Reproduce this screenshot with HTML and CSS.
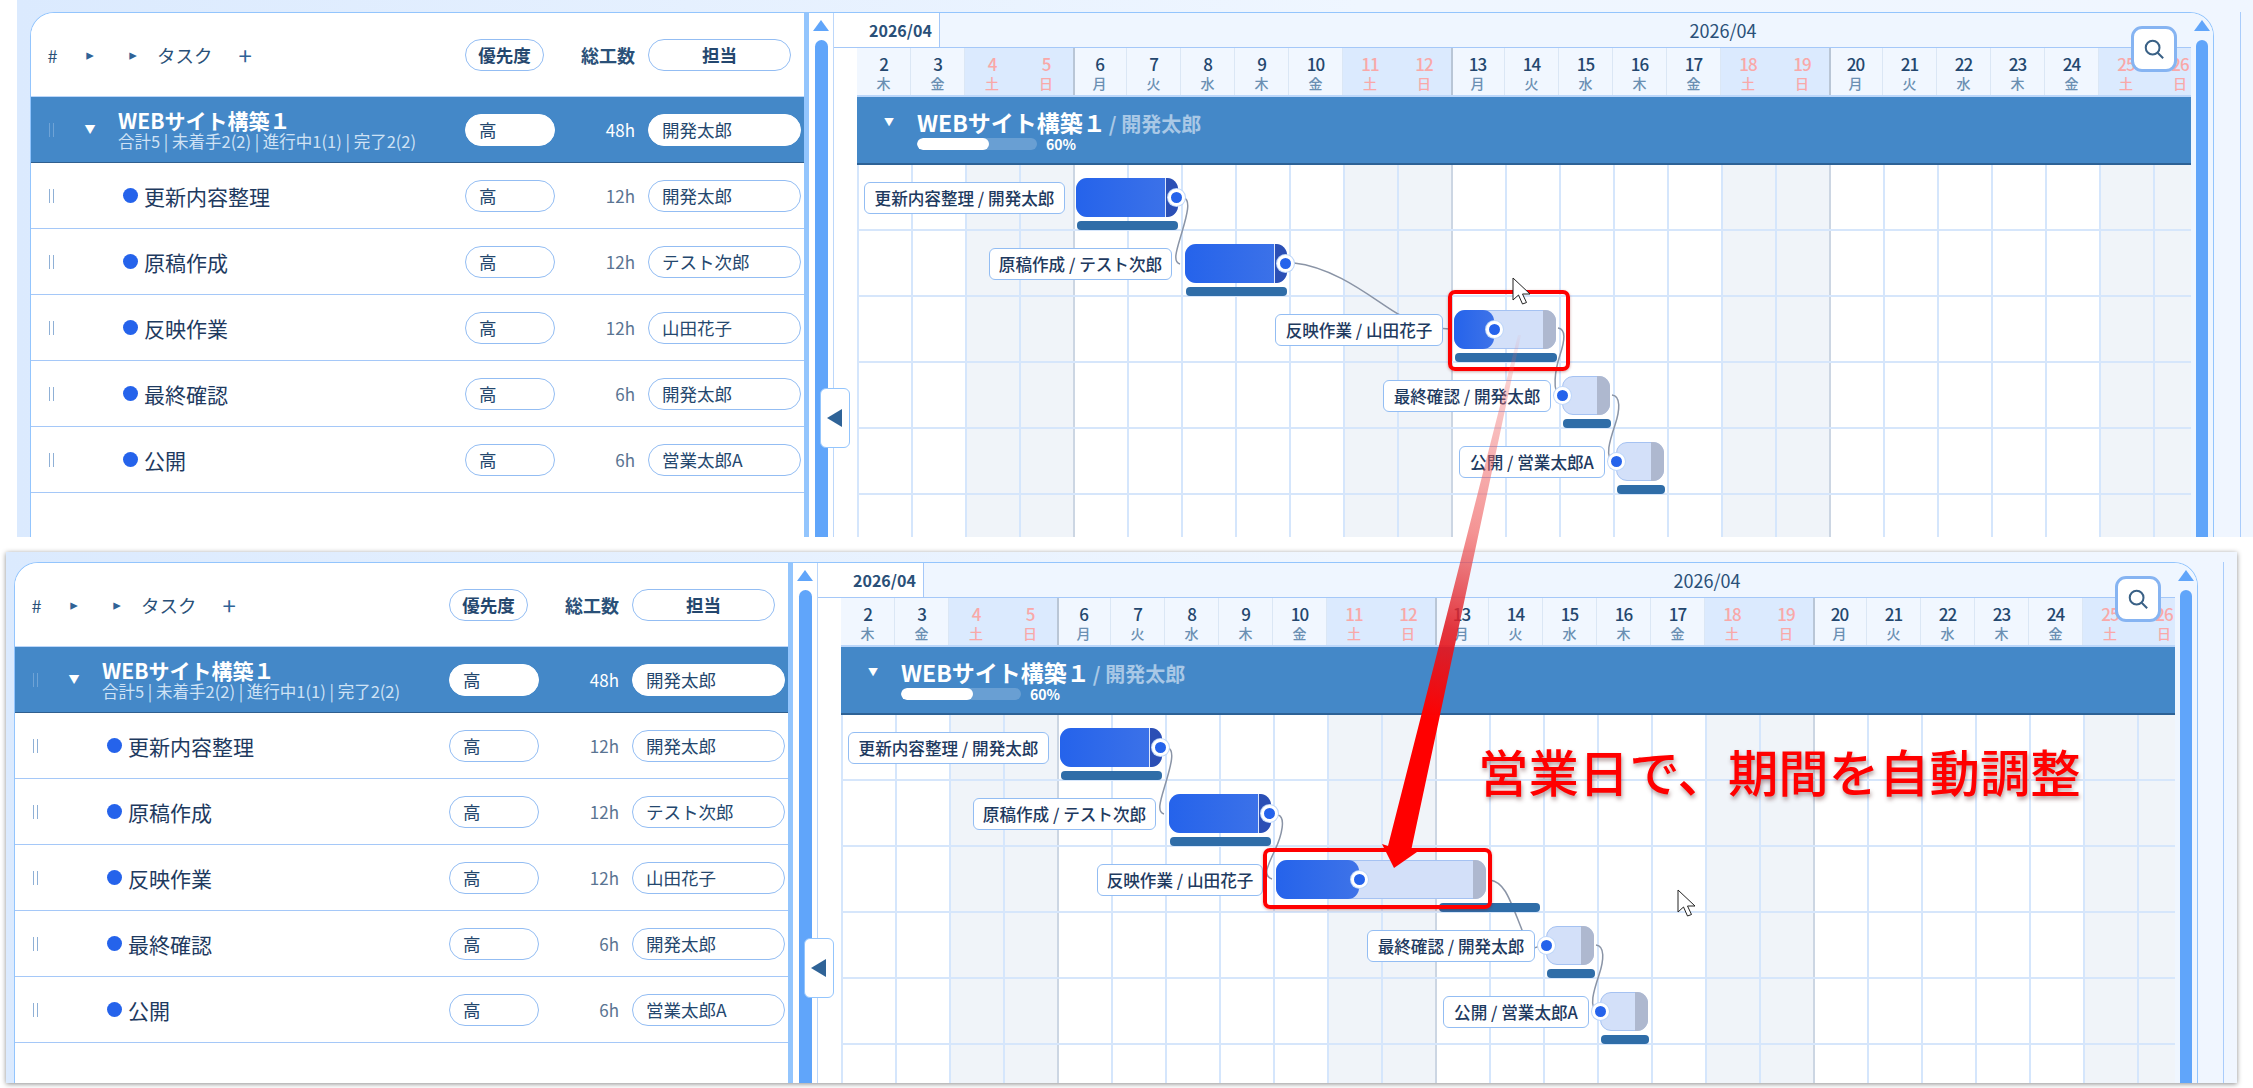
FILE: index.html
```html
<!DOCTYPE html>
<html lang="ja">
<head>
    <meta charset="UTF-8">
    <title>営業日で、期間を自動調整</title>
    <link rel="stylesheet" href="styles.css">
</head>
<body>
    <div class="shot shot-a">
        <div class="panel">
            <div class="task-pane">
                <div class="t-row t-head">
                    <span class="hash">#</span>
                    <span class="tri">▸</span>
                    <span class="t-name"><span class="tri tri-b">▸</span><span class="task-title">タスク</span><span class="plus">+</span></span>
                    <span class="pill pill-head">優先度</span>
                    <span class="hours head-hours">総工数</span>
                    <span class="pill pill-user pill-head-user">担当</span>
                </div>
                <div class="t-row t-group">
                    <span class="drag"></span>
                    <span class="down">▼</span>
                    <span class="t-name group-name"><b>WEBサイト構築１</b><small>合計5 | 未着手2(2) | 進行中1(1) | 完了2(2)</small></span>
                    <span class="pill pill-prio">高</span>
                    <span class="hours">48h</span>
                    <span class="pill pill-user">開発太郎</span>
                </div>
                <div class="t-row"><span class="drag"></span><span></span><span class="t-name"><i class="dot"></i>更新内容整理</span><span class="pill pill-prio">高</span><span class="hours">12h</span><span class="pill pill-user">開発太郎</span></div>
                <div class="t-row"><span class="drag"></span><span></span><span class="t-name"><i class="dot"></i>原稿作成</span><span class="pill pill-prio">高</span><span class="hours">12h</span><span class="pill pill-user">テスト次郎</span></div>
                <div class="t-row"><span class="drag"></span><span></span><span class="t-name"><i class="dot"></i>反映作業</span><span class="pill pill-prio">高</span><span class="hours">12h</span><span class="pill pill-user">山田花子</span></div>
                <div class="t-row"><span class="drag"></span><span></span><span class="t-name"><i class="dot"></i>最終確認</span><span class="pill pill-prio">高</span><span class="hours">6h</span><span class="pill pill-user">開発太郎</span></div>
                <div class="t-row"><span class="drag"></span><span></span><span class="t-name"><i class="dot"></i>公開</span><span class="pill pill-prio">高</span><span class="hours">6h</span><span class="pill pill-user">営業太郎A</span></div>
            </div>
            <div class="vscroll vscroll-left"><i class="up"></i><i class="thumb"></i></div>
            <button class="collapse"><svg width="16" height="18" viewBox="0 0 16 18"><polygon points="0,9 15,0 15,18" fill="#2f6397"/></svg></button>
            <div class="gantt-pane">
                <div class="gantt-main">
                    <div class="months"><span class="month-tab">2026/04</span><span class="month-rest">2026/04</span></div>
                    <div class="days">
                        <div class="day"><b>2</b><span>木</span></div>
                        <div class="day"><b>3</b><span>金</span></div>
                        <div class="day off"><b>4</b><span>土</span></div>
                        <div class="day off"><b>5</b><span>日</span></div>
                        <div class="day mon"><b>6</b><span>月</span></div>
                        <div class="day"><b>7</b><span>火</span></div>
                        <div class="day"><b>8</b><span>水</span></div>
                        <div class="day"><b>9</b><span>木</span></div>
                        <div class="day"><b>10</b><span>金</span></div>
                        <div class="day off"><b>11</b><span>土</span></div>
                        <div class="day off"><b>12</b><span>日</span></div>
                        <div class="day mon"><b>13</b><span>月</span></div>
                        <div class="day"><b>14</b><span>火</span></div>
                        <div class="day"><b>15</b><span>水</span></div>
                        <div class="day"><b>16</b><span>木</span></div>
                        <div class="day"><b>17</b><span>金</span></div>
                        <div class="day off"><b>18</b><span>土</span></div>
                        <div class="day off"><b>19</b><span>日</span></div>
                        <div class="day mon"><b>20</b><span>月</span></div>
                        <div class="day"><b>21</b><span>火</span></div>
                        <div class="day"><b>22</b><span>水</span></div>
                        <div class="day"><b>23</b><span>木</span></div>
                        <div class="day"><b>24</b><span>金</span></div>
                        <div class="day off"><b>25</b><span>土</span></div>
                        <div class="day off"><b>26</b><span>日</span></div>
                    </div>
                    <div class="band">
                        <span class="band-tri">▼</span>
                        <div class="band-text">
                            <div class="band-title"><b>WEBサイト構築１</b><span>/ 開発太郎</span></div>
                            <div class="band-prog"><div class="track"><div class="track-fill" style="width:60%"></div></div><span>60%</span></div>
                        </div>
                    </div>
                    <div class="grid">
                        <svg class="links" viewBox="857 165 1334 372">
                            <path d="M1184 198C1191 200 1187 215 1182 232S1172 262 1180 264"/>
                            <path d="M1294 263C1340 268 1380 305 1400 315S1430 328 1450 329"/>
                            <path d="M1558 328C1566 329 1565 340 1560 355S1552 392 1560 396"/>
                            <path d="M1612 395C1621 396 1620 410 1615 425S1604 458 1614 462"/>
                        </svg>
                        <div class="g-row r1"><div class="label">更新内容整理 / 開発太郎</div><div class="bar done"><i class="end"></i><div class="fill" style="width:100%"><i class="knob"></i></div></div><i class="sub"></i></div>
                        <div class="g-row r2"><div class="label">原稿作成 / テスト次郎</div><div class="bar done"><i class="end"></i><div class="fill" style="width:100%"><i class="knob"></i></div></div><i class="sub"></i></div>
                        <div class="g-row r3"><div class="label">反映作業 / 山田花子</div><div class="bar"><i class="end"></i><div class="fill" style="width:40%"><i class="knob"></i></div></div><i class="sub"></i></div>
                        <div class="g-row r4"><div class="label">最終確認 / 開発太郎</div><div class="bar"><i class="end"></i><div class="fill" style="width:0"><i class="knob"></i></div></div><i class="sub"></i></div>
                        <div class="g-row r5"><div class="label">公開 / 営業太郎A</div><div class="bar"><i class="end"></i><div class="fill" style="width:0"><i class="knob"></i></div></div><i class="sub"></i></div>
                    </div>
                </div>
                <div class="vscroll vscroll-right"><i class="up"></i><i class="thumb"></i></div>
            </div>
            <button class="zoom-btn"><svg width="22" height="22" viewBox="0 0 24 24"><circle cx="10.5" cy="10.5" r="7.5"/><path d="M16 16l6 6"/></svg></button>
        </div>
        <i class="edge"></i>
    </div>

    <div class="shot shot-b">
        <div class="panel">
            <div class="task-pane">
                <div class="t-row t-head">
                    <span class="hash">#</span>
                    <span class="tri">▸</span>
                    <span class="t-name"><span class="tri tri-b">▸</span><span class="task-title">タスク</span><span class="plus">+</span></span>
                    <span class="pill pill-head">優先度</span>
                    <span class="hours head-hours">総工数</span>
                    <span class="pill pill-user pill-head-user">担当</span>
                </div>
                <div class="t-row t-group">
                    <span class="drag"></span>
                    <span class="down">▼</span>
                    <span class="t-name group-name"><b>WEBサイト構築１</b><small>合計5 | 未着手2(2) | 進行中1(1) | 完了2(2)</small></span>
                    <span class="pill pill-prio">高</span>
                    <span class="hours">48h</span>
                    <span class="pill pill-user">開発太郎</span>
                </div>
                <div class="t-row"><span class="drag"></span><span></span><span class="t-name"><i class="dot"></i>更新内容整理</span><span class="pill pill-prio">高</span><span class="hours">12h</span><span class="pill pill-user">開発太郎</span></div>
                <div class="t-row"><span class="drag"></span><span></span><span class="t-name"><i class="dot"></i>原稿作成</span><span class="pill pill-prio">高</span><span class="hours">12h</span><span class="pill pill-user">テスト次郎</span></div>
                <div class="t-row"><span class="drag"></span><span></span><span class="t-name"><i class="dot"></i>反映作業</span><span class="pill pill-prio">高</span><span class="hours">12h</span><span class="pill pill-user">山田花子</span></div>
                <div class="t-row"><span class="drag"></span><span></span><span class="t-name"><i class="dot"></i>最終確認</span><span class="pill pill-prio">高</span><span class="hours">6h</span><span class="pill pill-user">開発太郎</span></div>
                <div class="t-row"><span class="drag"></span><span></span><span class="t-name"><i class="dot"></i>公開</span><span class="pill pill-prio">高</span><span class="hours">6h</span><span class="pill pill-user">営業太郎A</span></div>
            </div>
            <div class="vscroll vscroll-left"><i class="up"></i><i class="thumb"></i></div>
            <button class="collapse"><svg width="16" height="18" viewBox="0 0 16 18"><polygon points="0,9 15,0 15,18" fill="#2f6397"/></svg></button>
            <div class="gantt-pane">
                <div class="gantt-main">
                    <div class="months"><span class="month-tab">2026/04</span><span class="month-rest">2026/04</span></div>
                    <div class="days">
                        <div class="day"><b>2</b><span>木</span></div>
                        <div class="day"><b>3</b><span>金</span></div>
                        <div class="day off"><b>4</b><span>土</span></div>
                        <div class="day off"><b>5</b><span>日</span></div>
                        <div class="day mon"><b>6</b><span>月</span></div>
                        <div class="day"><b>7</b><span>火</span></div>
                        <div class="day"><b>8</b><span>水</span></div>
                        <div class="day"><b>9</b><span>木</span></div>
                        <div class="day"><b>10</b><span>金</span></div>
                        <div class="day off"><b>11</b><span>土</span></div>
                        <div class="day off"><b>12</b><span>日</span></div>
                        <div class="day mon"><b>13</b><span>月</span></div>
                        <div class="day"><b>14</b><span>火</span></div>
                        <div class="day"><b>15</b><span>水</span></div>
                        <div class="day"><b>16</b><span>木</span></div>
                        <div class="day"><b>17</b><span>金</span></div>
                        <div class="day off"><b>18</b><span>土</span></div>
                        <div class="day off"><b>19</b><span>日</span></div>
                        <div class="day mon"><b>20</b><span>月</span></div>
                        <div class="day"><b>21</b><span>火</span></div>
                        <div class="day"><b>22</b><span>水</span></div>
                        <div class="day"><b>23</b><span>木</span></div>
                        <div class="day"><b>24</b><span>金</span></div>
                        <div class="day off"><b>25</b><span>土</span></div>
                        <div class="day off"><b>26</b><span>日</span></div>
                    </div>
                    <div class="band">
                        <span class="band-tri">▼</span>
                        <div class="band-text">
                            <div class="band-title"><b>WEBサイト構築１</b><span>/ 開発太郎</span></div>
                            <div class="band-prog"><div class="track"><div class="track-fill" style="width:60%"></div></div><span>60%</span></div>
                        </div>
                    </div>
                    <div class="grid">
                        <svg class="links" viewBox="841 715 1334 372">
                            <path d="M1168 748C1175 750 1171 765 1166 782S1156 812 1164 814"/>
                            <path d="M1278 815C1286 817 1282 835 1275 850S1262 876 1272 879"/>
                            <path d="M1490 880C1505 882 1510 900 1522 930S1530 944 1546 946"/>
                            <path d="M1596 945C1605 946 1604 960 1599 975S1588 1008 1598 1012"/>
                        </svg>
                        <div class="g-row r1"><div class="label">更新内容整理 / 開発太郎</div><div class="bar done"><i class="end"></i><div class="fill" style="width:100%"><i class="knob"></i></div></div><i class="sub"></i></div>
                        <div class="g-row r2"><div class="label">原稿作成 / テスト次郎</div><div class="bar done"><i class="end"></i><div class="fill" style="width:100%"><i class="knob"></i></div></div><i class="sub"></i></div>
                        <div class="g-row r3"><div class="label">反映作業 / 山田花子</div><div class="bar"><i class="end"></i><div class="fill" style="width:40%"><i class="knob"></i></div></div><i class="sub"></i></div>
                        <div class="g-row r4"><div class="label">最終確認 / 開発太郎</div><div class="bar"><i class="end"></i><div class="fill" style="width:0"><i class="knob"></i></div></div><i class="sub"></i></div>
                        <div class="g-row r5"><div class="label">公開 / 営業太郎A</div><div class="bar"><i class="end"></i><div class="fill" style="width:0"><i class="knob"></i></div></div><i class="sub"></i></div>
                    </div>
                </div>
                <div class="vscroll vscroll-right"><i class="up"></i><i class="thumb"></i></div>
            </div>
            <button class="zoom-btn"><svg width="22" height="22" viewBox="0 0 24 24"><circle cx="10.5" cy="10.5" r="7.5"/><path d="M16 16l6 6"/></svg></button>
        </div>
        <i class="edge"></i>
    </div>

    <!-- annotations drawn on top of the two screenshots -->
    <div class="hl hl-a"></div>
    <div class="hl hl-b"></div>
    <svg class="arrow" width="2253" height="1088" viewBox="0 0 2253 1088">
        <defs>
            <linearGradient id="arrowFade" gradientUnits="userSpaceOnUse" x1="1519" y1="335" x2="1394" y2="868">
                <stop offset="0" stop-color="#f06a6a" stop-opacity="0.05"/>
                <stop offset="0.1" stop-color="#f06a6a" stop-opacity="0.35"/>
                <stop offset="0.37" stop-color="#ee5a5a" stop-opacity="0.65"/>
                <stop offset="0.55" stop-color="#e01b24" stop-opacity="0.88"/>
                <stop offset="0.72" stop-color="#ff0000"/>
                <stop offset="1" stop-color="#ff0000"/>
            </linearGradient>
        </defs>
        <polygon points="1518,335 1521,335 1411,851 1417,852 1394,868 1382,844 1388,846" fill="url(#arrowFade)"/>
    </svg>
    <div class="note">営業日で、期間を自動調整</div>
    <svg class="cursor cursor-a" width="20" height="28" viewBox="0 0 20 28"><path d="M1 1V23L6.500 18L10.500 27L14.500 25.500L10.500 17H18Z"/></svg>
    <svg class="cursor cursor-b" width="20" height="28" viewBox="0 0 20 28"><path d="M1 1V23L6.500 18L10.500 27L14.500 25.500L10.500 17H18Z"/></svg>
</body>
</html>
```

FILE: styles.css
```css
* { margin: 0; padding: 0; box-sizing: border-box; }
html, body { width: 2253px; height: 1088px; overflow: hidden; background: #fff; }
body {
    position: relative;
    font-family: "Noto Sans CJK JP", "Noto Sans", sans-serif;
    color: #1e3a5f;
}
i { display: block; font-style: normal; }

/* screenshot frames */
.shot {
    position: relative;
    display: flex;
    overflow: hidden;
    background: linear-gradient(90deg, #dbeafe 0%, #eff6ff 60%, #f0f6ff 100%);
}
.shot-a { margin-left: 17px; height: 537px; padding: 12px 39px 0 13px; }
.shot-b {
    width: 2231px;
    height: 531px;
    margin: 15px 0 0 6px;
    padding: 10px 39px 0 8px;
    box-shadow: 0 1px 5px rgba(0,0,0,0.45);
    overflow: visible;
}
.shot-b .panel { height: 521px; }
.edge { position: absolute; top: 12px; bottom: 0; right: 12px; width: 1px; background: #a9ccfb; }
.shot-b .edge { top: 10px; right: 13px; }

.panel {
    position: relative;
    display: flex;
    flex: none;
    width: 2184px;
    height: 525px;
    overflow: hidden;
    background: #fff;
    border: 1px solid #93c5fd;
    border-bottom: 0;
    border-radius: 24px 24px 0 0;
}

/* task table */
.task-pane { flex: none; width: 773px; background: #fff; }
.t-row {
    display: grid;
    grid-template-columns: 39px 40px 355px 90px 80px 166px;
    align-items: center;
    height: 66px;
    border-bottom: 1px solid #a5c8f8;
}
.t-head { height: 84px; border-bottom: 1px solid #bcd7fa; font-weight: 700; color: #2a5078; }
.hash { font-size: 18px; text-align: center; padding-left: 4px; font-weight: 400; }
.tri { font-family: "DejaVu Sans", sans-serif; font-size: 15px; text-align: center; color: #2f6397; }
.tri-b { width: 24px; margin-right: 12px; margin-left: 11px; text-align: center; }
.task-title { font-size: 18.500px; }
.plus { font-size: 24px; font-weight: 400; margin-left: 26px; line-height: 1; color: #2f6397; }
.t-name { display: flex; align-items: center; padding-left: 13px; font-size: 21px; font-weight: 400; white-space: nowrap; }
.t-head .t-name { padding-left: 0; }
.dot { width: 15px; height: 15px; margin-right: 6px; border-radius: 50%; background: #2563eb; }
.drag { justify-self: center; margin-left: 2px; width: 5px; height: 14px; border-left: 1px solid #8fb0d6; border-right: 1px solid #8fb0d6; }
.pill {
    display: flex;
    align-items: center;
    height: 32px;
    padding-left: 13px;
    font-size: 17.500px;
    background: #fff;
    border: 1px solid #93bdf3;
    border-radius: 16px;
    white-space: nowrap;
    color: #24476e;
}
.pill-head { width: 79px; padding: 0; justify-content: center; font-weight: 700; }
.pill-user { margin-left: 13px; width: 153px; }
.pill-head-user { width: 143px; padding: 0; justify-content: center; }
.hours { font-size: 17px; text-align: right; color: #5a7492; font-weight: 400; }
.head-hours { font-size: 18px; font-weight: 700; color: #2a5078; }

.t-group { background: #4488c8; border-bottom: 1px solid #2f5f8f; color: #fff; }
.t-group .drag { border-color: #6fa3d6; }
.t-group .pill { border-color: #fff; color: #24476e; }
.t-group .hours { color: #fff; }
.down { font-size: 11px; text-align: center; color: #fff; line-height: 1; }
.group-name { flex-direction: column; align-items: flex-start; padding-left: 8px; line-height: 1.150; }
.group-name b { font-size: 21px; font-weight: 700; }
.group-name small { font-size: 16.500px; font-weight: 400; color: #cfe2f5; }

/* scrollbars */
.vscroll { flex: none; position: relative; background: #fff; overflow: hidden; }
.vscroll-left { width: 30px; border-left: 5px solid #93c5fd; border-right: 1px solid #bcd7fa; }
.vscroll-right { width: 22px; background: #eff6ff; }
.up {
    position: absolute;
    top: 7px;
    left: 4px;
    width: 0;
    height: 0;
    border-left: 8px solid transparent;
    border-right: 8px solid transparent;
    border-bottom: 11px solid #60a5fa;
}
.thumb { position: absolute; top: 27px; bottom: -10px; left: 6px; width: 13px; border-radius: 7px 7px 0 0; background: #60a5fa; }
.vscroll-right .up { left: 3px; }
.vscroll-right .thumb { left: 5px; width: 12px; }

.collapse {
    position: absolute;
    left: 789px;
    top: 375px;
    z-index: 5;
    width: 30px;
    height: 60px;
    display: flex;
    align-items: center;
    justify-content: center;
    background: #fff;
    border: 1px solid #93c5fd;
    border-radius: 6px;
}
.zoom-btn {
    position: absolute;
    left: 2100px;
    top: 13px;
    z-index: 5;
    width: 46px;
    height: 46px;
    display: flex;
    align-items: center;
    justify-content: center;
    background: #fff;
    border: 3px solid #86b4f2;
    border-radius: 11px;
}
.zoom-btn svg { fill: none; stroke: #3a6186; stroke-width: 2.200; }

/* gantt */
.gantt-pane { flex: none; display: flex; width: 1379px; }
.gantt-main { flex: none; width: 1357px; background: #fff; overflow: hidden; }
.months { display: flex; height: 35px; border-bottom: 1px solid #a5c8f8; font-size: 16px; color: #2a5078; }
.month-tab { flex: none; width: 106px; padding-left: 35px; line-height: 34px; font-weight: 700; background: #fff; border-right: 1px solid #a5c8f8; }
.month-rest { flex: 1; padding-left: 315px; font-size: 18px; line-height: 34px; text-align: center; background: #eff6ff; font-weight: 400; }

.days { display: flex; width: 1334px; height: 49px; margin-left: 23px; overflow: hidden; border-bottom: 2px solid #bcd7fa; }
.day {
    flex: none;
    width: 54px;
    padding-top: 5px;
    display: flex;
    flex-direction: column;
    align-items: center;
    background: #f1f7ff;
    border-right: 1px solid #dbe7f5;
}
.day b { font-size: 17px; font-weight: 500; line-height: 22px; letter-spacing: -1px; color: #24476e; }
.day span { font-size: 14px; line-height: 16px; color: #6a8fb2; font-weight: 500; }
.day.off { background: #dbeafe; border-right: 0; }
.day.off b, .day.off span { color: #f9a8a8; }
.day.mon { box-shadow: inset 2px 0 #b9c6d6; }

.band {
    display: flex;
    width: 1334px;
    height: 68px;
    margin-left: 23px;
    padding: 10px 0 0 27px;
    color: #fff;
    background: #4488c8;
    border-bottom: 2px solid #2d6296;
}
.band-tri { font-size: 10px; width: 33px; line-height: 30px; }
.band-title { display: flex; align-items: baseline; height: 30px; line-height: 30px; }
.band-title b { font-size: 23px; font-weight: 700; }
.band-title span { margin-left: 3px; font-size: 20px; font-weight: 700; color: #a9c8e6; }
.band-prog { display: flex; align-items: center; gap: 9px; font-size: 14px; font-weight: 700; line-height: 14px; }
.track { width: 120px; height: 12px; border-radius: 6px; background: rgba(255,255,255,0.2); overflow: hidden; }
.track-fill { height: 100%; border-radius: 6px; background: #fff; }

.grid {
    position: relative;
    width: 1334px;
    height: 372px;
    margin-left: 23px;
    background-image:
        repeating-linear-gradient(180deg, transparent 0 64px, #d6e6fb 64px 66px),
        repeating-linear-gradient(90deg, transparent 0 216px, #ccd6e3 216px 218px, transparent 218px 378px),
        repeating-linear-gradient(90deg, #d5e6fc 0 2px, transparent 2px 54px),
        repeating-linear-gradient(90deg, transparent 0 108px, #f0f4f9 108px 216px, transparent 216px 378px);
}
.links { position: absolute; left: 0; top: 0; width: 1334px; height: 372px; fill: none; stroke: #8a94a6; stroke-width: 1.500; }
.g-row { position: relative; height: 66px; }
.label {
    position: absolute;
    top: 17px;
    height: 32px;
    line-height: 30px;
    text-align: center;
    font-size: 16.600px;
    font-weight: 500;
    white-space: nowrap;
    background: #fff;
    border: 1px solid #93bdf3;
    border-radius: 6px;
    color: #1e3a5f;
}
.bar { position: absolute; top: 13px; height: 39px; background: #d3e0f9; border: 1px solid #a5c2f2; border-radius: 11px; }
.fill { position: absolute; left: -1px; top: -1px; bottom: -1px; background: linear-gradient(90deg, #2563eb, #3e73e8); border-radius: 11px; }
.end { position: absolute; right: -1px; top: -1px; bottom: -1px; width: 13px; background: #aeb8cf; border-radius: 0 11px 11px 0; }
.bar.done .end { z-index: 1; background: #2b4fb5; border-left: 1px solid #dbe6fb; }
.knob {
    position: absolute;
    right: -9px;
    top: 50%;
    z-index: 2;
    width: 17px;
    height: 17px;
    margin-top: -9px;
    background: #2563eb;
    border: 3.500px solid #fff;
    border-radius: 50%;
    box-shadow: 0 0 0 1px #bfd7fa;
}
.sub { position: absolute; top: 56px; height: 9px; border-radius: 4px; background: #2f6da8; }

.r1 .label { left: 7px; width: 201px; }
.r1 .bar { left: 219px; width: 102px; }
.r1 .sub { left: 220px; width: 101px; }
.r2 .label { left: 132px; width: 183px; }
.r2 .bar { left: 328px; width: 102px; }
.r2 .sub { left: 329px; width: 101px; }
.r3 .label { left: 418px; width: 168px; }
.r3 .bar { left: 597px; width: 102px; }
.r3 .sub { left: 598px; width: 102px; }
.r4 .label { left: 526px; width: 168px; }
.r4 .bar { left: 705px; width: 48px; }
.r4 .sub { left: 706px; width: 48px; }
.r5 .label { left: 602px; width: 146px; }
.r5 .bar { left: 759px; width: 48px; }
.r5 .sub { left: 760px; width: 48px; }
.shot-b .r3 .label { left: 256px; width: 166px; }
.shot-b .r3 .bar { left: 435px; width: 210px; }
.shot-b .r3 .sub { left: 598px; width: 101px; }

/* annotations */
.hl { position: absolute; z-index: 10; border: 4px solid #f00; border-radius: 7px; box-shadow: 0 1px 3px rgba(120,0,0,0.35); }
.hl-a { left: 1448px; top: 290px; width: 122px; height: 81px; }
.hl-b { left: 1263px; top: 848px; width: 229px; height: 61px; }
.arrow { position: absolute; left: 0; top: 0; z-index: 11; pointer-events: none; }
.note {
    position: absolute;
    left: 1478px;
    top: 735px;
    z-index: 11;
    font-size: 50.400px;
    font-weight: 500;
    line-height: 72px;
    white-space: nowrap;
    color: #f00;
    text-shadow: 1px 3px 4px rgba(90,40,40,0.45);
}
.cursor { position: absolute; z-index: 12; fill: #fff; stroke: #222; stroke-width: 1; }
.cursor-a { left: 1512px; top: 277px; }
.cursor-b { left: 1677px; top: 889px; }
```
